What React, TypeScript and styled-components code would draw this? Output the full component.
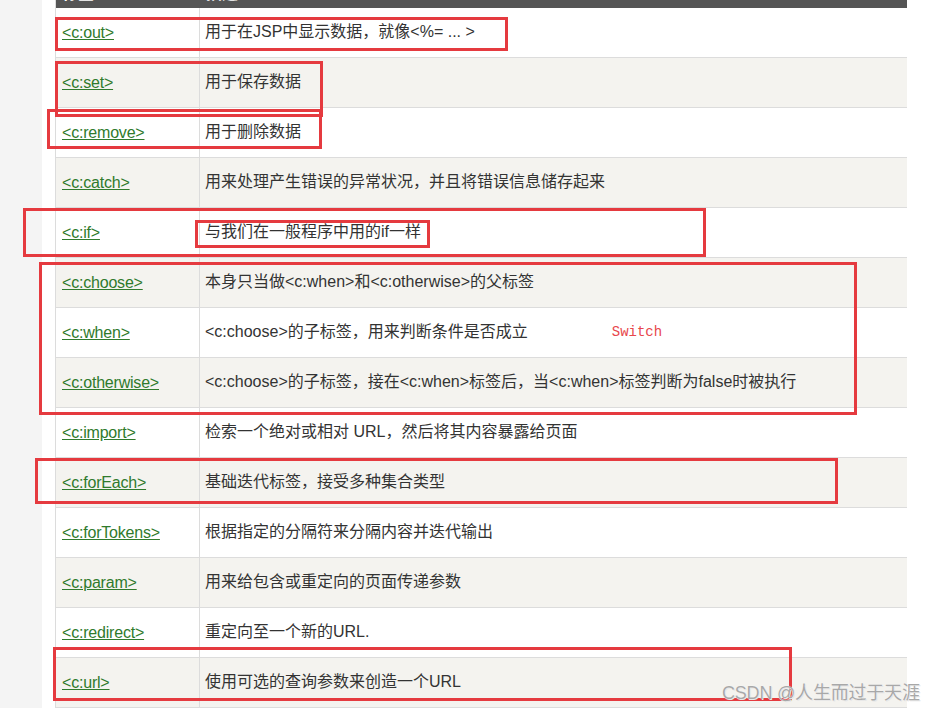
import React from "react";
import styled, { createGlobalStyle } from "styled-components";

const Global = createGlobalStyle`
  html, body { margin: 0; padding: 0; background: #ffffff; }
  body { font-family: "Liberation Sans", "Noto Sans CJK SC", Arial, sans-serif; }
`;

const Page = styled.div`
  position: relative;
  width: 938px;
  height: 708px;
  overflow: hidden;
  display: grid;
  grid-template-columns: 42px 13px 852px 1fr;
  align-items: start;
`;

const Sidebar = styled.div`
  background: #f4f4f4;
  height: 708px;
`;

const Gutter = styled.div`
  background: #ffffff;
  height: 708px;
`;

const Table = styled.div`
  margin-top: -32px;
  display: flex;
  flex-direction: column;
  border-left: 1px solid #dcdcdc;
`;

const HeaderRow = styled.div`
  display: grid;
  grid-template-columns: 144px 1fr;
  height: 40px;
  background: #555555;
  color: #ffffff;
  font-weight: bold;
  font-size: 16px;
`;

const HeadCell = styled.div`
  display: flex;
  align-items: flex-end;
  padding: 0 0 6px 6px;
  line-height: 16px;
`;

const Row = styled.div<{ $alt: boolean }>`
  display: grid;
  grid-template-columns: 144px 1fr;
  height: 50px;
  box-sizing: border-box;
  border-bottom: 1px solid #dcdcdc;
  background: ${(p) => (p.$alt ? "#f4f3ef" : "#ffffff")};
`;

const TagCell = styled.div`
  display: flex;
  align-items: center;
  padding-left: 6px;
  border-right: 1px solid #dcdcdc;
`;

const TagLink = styled.a`
  color: #2f7a2c;
  text-decoration: underline;
  font-size: 16px;
  letter-spacing: -0.2px;
`;

const DescCell = styled.div`
  display: flex;
  align-items: center;
  padding: 0 0 1px 5px;
  color: #333333;
  font-size: 16px;
  line-height: 20px;
  white-space: nowrap;
`;

const Note = styled.span`
  margin-left: 84px;
  color: #e8474c;
  font-family: "Liberation Mono", "DejaVu Sans Mono", monospace;
  font-size: 14px;
`;

const Mark = styled.div`
  position: absolute;
  box-sizing: border-box;
  border: 3px solid #e53a3f;
  pointer-events: none;
`;

const Watermark = styled.div`
  position: absolute;
  left: 722px;
  top: 678px;
  font-size: 18px;
  color: #a8a8a8;
  text-shadow: 0 0 1px #ffffff, 1px 1px 0 #e6e6e6;
  white-space: nowrap;
  letter-spacing: -0.2px;
`;

type Item = { tag: string; desc: string; note?: string };

const items: Item[] = [
  { tag: "<c:out>", desc: "用于在JSP中显示数据，就像<%= ... >" },
  { tag: "<c:set>", desc: "用于保存数据" },
  { tag: "<c:remove>", desc: "用于删除数据" },
  { tag: "<c:catch>", desc: "用来处理产生错误的异常状况，并且将错误信息储存起来" },
  { tag: "<c:if>", desc: "与我们在一般程序中用的if一样" },
  { tag: "<c:choose>", desc: "本身只当做<c:when>和<c:otherwise>的父标签" },
  { tag: "<c:when>", desc: "<c:choose>的子标签，用来判断条件是否成立", note: "Switch" },
  { tag: "<c:otherwise>", desc: "<c:choose>的子标签，接在<c:when>标签后，当<c:when>标签判断为false时被执行" },
  { tag: "<c:import>", desc: "检索一个绝对或相对 URL，然后将其内容暴露给页面" },
  { tag: "<c:forEach>", desc: "基础迭代标签，接受多种集合类型" },
  { tag: "<c:forTokens>", desc: "根据指定的分隔符来分隔内容并迭代输出" },
  { tag: "<c:param>", desc: "用来给包含或重定向的页面传递参数" },
  { tag: "<c:redirect>", desc: "重定向至一个新的URL." },
  { tag: "<c:url>", desc: "使用可选的查询参数来创造一个URL" },
];

const marks = [
  { x: 55, y: 17, w: 453, h: 34 },
  { x: 55, y: 61, w: 268, h: 56 },
  { x: 47, y: 109, w: 275, h: 40 },
  { x: 23, y: 208, w: 683, h: 49 },
  { x: 195, y: 220, w: 235, h: 28 },
  { x: 39, y: 262, w: 818, h: 153 },
  { x: 35, y: 458, w: 803, h: 46 },
  { x: 53, y: 647, w: 739, h: 54 },
];

export default function App() {
  return (
    <>
      <Global />
      <Page>
        <Sidebar />
        <Gutter />
        <Table>
          <HeaderRow>
            <HeadCell>标签</HeadCell>
            <HeadCell>描述</HeadCell>
          </HeaderRow>
          {items.map((it, i) => (
            <Row key={it.tag} $alt={i % 2 === 1}>
              <TagCell>
                <TagLink href="#">{it.tag}</TagLink>
              </TagCell>
              <DescCell>
                {it.desc}
                {it.note && <Note>{it.note}</Note>}
              </DescCell>
            </Row>
          ))}
        </Table>
        <div />
        {marks.map((m, i) => (
          <Mark
            key={i}
            style={{ left: m.x, top: m.y, width: m.w, height: m.h }}
          />
        ))}
        <Watermark>CSDN @人生而过于天涯</Watermark>
      </Page>
    </>
  );
}
